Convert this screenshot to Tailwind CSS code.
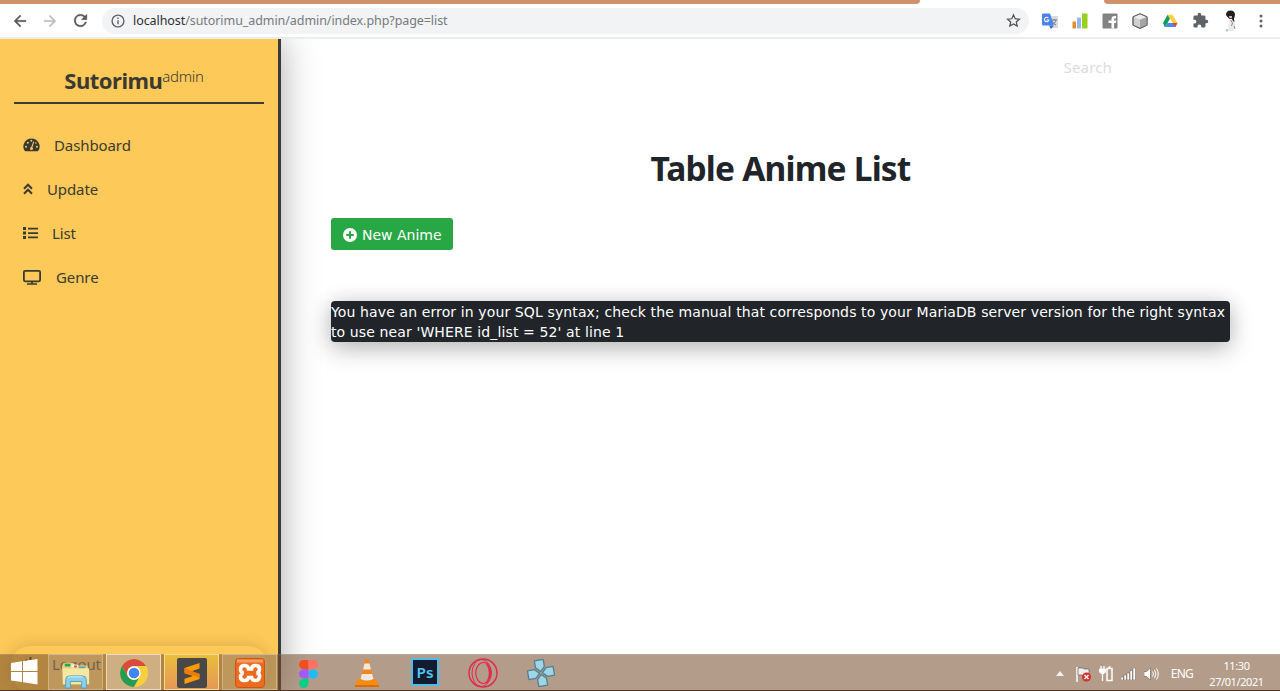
<!DOCTYPE html>
<html lang="en">
<head>
<meta charset="utf-8">
<title>Sutorimu admin</title>
<script src="https://cdn.jsdelivr.net/npm/@tailwindcss/browser@4"></script>
</head>
<body class="relative flex h-[691px] w-[1280px] flex-col overflow-hidden bg-white font-['Noto_Sans',sans-serif] text-[#212529]">

<!-- Browser tab strip -->
<div class="z-20 flex h-1 shrink-0 justify-between bg-white">
  <div class="w-[920px] rounded-br-[4px] bg-[#cf926c]"></div>
  <div class="w-[176px] rounded-bl-[4px] bg-[#cf926c]"></div>
</div>

<!-- Browser toolbar -->
<header class="z-20 flex h-[35px] shrink-0 items-center border-b-2 border-[#ebecec] bg-white pl-[11px] pr-[11px]">
  <svg class="h-[18px] w-[18px]" viewBox="0 0 24 24" fill="#55585c"><path d="M20 11H7.800l5.600-5.600L12 4l-8 8 8 8 1.400-1.400L7.800 13H20z" stroke="#55585c" stroke-width=".5"/></svg>
  <svg class="ml-3 h-[18px] w-[18px]" viewBox="0 0 24 24" fill="#bdbfc1"><path d="M4 11h12.200l-5.600-5.600L12 4l8 8-8 8-1.400-1.400 5.600-5.600H4z" stroke="#bdbfc1" stroke-width=".5"/></svg>
  <svg class="ml-3 h-[19px] w-[19px]" viewBox="0 0 24 24" fill="#55585c"><path d="M17.650 6.350A8 8 0 1 0 19.730 14h-2.080A6 6 0 1 1 12 6c1.660 0 3.140.69 4.220 1.780L13 11h7V4z" stroke="#55585c" stroke-width=".5"/></svg>
  <div class="ml-3 flex h-[26px] w-[927px] items-center rounded-full bg-[#f1f3f4] pl-[9px] pr-2">
    <svg class="h-[14px] w-[14px]" viewBox="0 0 14 14" fill="none" stroke="#5f6368" stroke-width="1.400"><circle cx="7" cy="7" r="5.900"/><path d="M7 6.200v4M7 3.600v1.400"/></svg>
    <span class="ml-2 pt-[2px] text-[12.5px] leading-none tracking-[-0.07px] text-[#777a7e] whitespace-nowrap"><span class="text-[#303134]">localhost</span>/sutorimu_admin/admin/index.php?page=list</span>
    <svg class="ml-auto h-[15px] w-[15px]" viewBox="0 0 24 24" fill="none" stroke="#505357" stroke-width="2"><path d="M12 3l2.700 6.200 6.800.6-5.100 4.500 1.500 6.600-5.900-3.500-5.900 3.500 1.500-6.600L2.500 9.800l6.800-.6z"/></svg>
  </div>
  <div class="ml-[13px] flex flex-1 items-center justify-between">
    <svg class="h-4 w-4" viewBox="0 0 16 16"><path d="M7 3h8a1 1 0 0 1 1 1v11H9z" fill="#d7dadf"/><path d="M9 7h6M12 6v1m2 0c-.5 2-2 4-4 5m0-4c1 2 2.500 3.500 4 4" stroke="#6d7b85" fill="none"/><path d="M1.200.5H8l3.500 11-2.500 1H1.200A1.200 1.200 0 0 1 0 11.300V1.700A1.200 1.200 0 0 1 1.200.5" fill="#4b83ea"/><path d="M7 12.500h5L9 16z" fill="#3367d6"/><path d="M6.300 5A2.200 2.200 0 1 0 6.800 7H4.700" fill="none" stroke="#fff" stroke-width="1.100"/></svg>
    <svg class="h-4 w-4" viewBox="0 0 16 16"><rect y="8.500" x=".5" width="3.500" height="7" rx=".5" fill="#f08a24"/><rect x="5" y="4.500" width="4" height="11" rx=".5" fill="#94b8ee"/><rect x="10" y=".5" width="5.500" height="15" rx=".5" fill="#97cf1c"/></svg>
    <svg class="h-4 w-4" viewBox="0 0 16 16"><rect x=".5" y=".5" width="15" height="15" rx="1" fill="#828282"/><path d="M14 3h-1.500c-2 0-3 1.200-3 3v1.500H6.500V10h3v5.500h2.600V10h1.900l.3-2.500h-2.200V6.400c0-.7.300-1 1-1H14z" fill="#fff"/></svg>
    <svg class="h-4 w-4" viewBox="0 0 16 16" stroke="#666" stroke-width="1" stroke-linejoin="round"><path d="M8 .8l7 3v8.400l-7 3.200-7-3.200V3.800z" fill="#d0d0d0"/><path d="M8 6.500l7-2.700v8.400l-7 3.200z" fill="#a5a5a5" stroke="none"/><path d="M1.500 4L8 6.500 14.500 4 8 1.300z" fill="#ececec" stroke="none"/><path d="M8 .8l7 3v8.400l-7 3.200-7-3.200V3.800z" fill="none"/></svg>
    <svg class="h-4 w-4" viewBox="0 0 16 16"><path d="M5.500 1.800h5L15.400 10h-5z" fill="#ffcf48"/><path d="M1 10l1.700 4h10.600l2.100-4H5.600L2.700 14z" fill="#4688f4"/><path d="M10.400 10h5l-2.100 4z" fill="#ea4335"/><path d="M1 10l1.700 4 2.900-4L8 6 5.500 1.800z" fill="#0f9d58"/><path d="M8 6l2.400 4H5.600z" fill="#fff"/></svg>
    <svg class="h-[17px] w-[17px]" viewBox="0 0 24 24" fill="#5f6368"><path d="M20.500 11H19V7a2 2 0 0 0-2-2h-4V3.500a2.500 2.500 0 0 0-5 0V5H4a2 2 0 0 0-2 2v3.800h1.500a2.700 2.700 0 0 1 0 5.400H2V20a2 2 0 0 0 2 2h3.800v-1.500a2.700 2.700 0 0 1 5.400 0V22H17a2 2 0 0 0 2-2v-4h1.500a2.500 2.500 0 0 0 0-5z"/></svg>
    <svg class="h-[22px] w-4" viewBox="0 0 16 22"><path d="M6 10l4-1 2.500 6-2 6H5l.5-5z" fill="#eceaec"/><path d="M3 5c0-3 1.500-4.500 4.500-4.500S12 2 12 5l-1 4 .5 3-1.500-1-1-2H6.500L4.500 7z" fill="#211d22"/><path d="M6 6h3L8.500 8.500 6.500 8z" fill="#e0c7c2"/><path d="M7.500 10l2 3-1 3M4 19v2.500M11 16l1 3" stroke="#8b878e" fill="none"/></svg>
    <svg class="h-4 w-4" viewBox="0 0 16 16" fill="#5f6368"><circle cx="8" cy="3" r="1.500"/><circle cx="8" cy="8" r="1.500"/><circle cx="8" cy="13" r="1.500"/></svg>
  </div>
</header>

<div class="flex min-h-0 flex-1">
  <!-- Sidebar -->
  <aside class="relative z-10 flex w-[281px] shrink-0 flex-col border-r-[3px] border-[#3a3a38] bg-[#fdc958] text-[#3a3a33] shadow-[0_0_34px_rgba(0,0,0,0.34)]">
    <div class="mx-[14px] flex h-[65px] items-start justify-center border-b-2 border-[#3a3a33] pr-[10px] pt-[25px]">
      <span class="text-[22px] font-bold leading-[32px] tracking-[-0.5px]">Sutorimu</span><span class="text-[15px] font-light leading-[24px] tracking-[-0.3px]">admin</span>
    </div>
    <nav class="mt-[19px] flex flex-col pl-[23px] text-[15px] leading-[44px] tracking-[-0.1px]">
      <a class="flex h-11 items-center"><svg class="h-[14px] w-[17px]" viewBox="0 0 17 14"><path d="M8.500.5a8 8 0 0 0-7 12c.2.500.6.700 1 .7h12c.4 0 .8-.2 1-.7a8 8 0 0 0-7-12z" fill="#3a3a33"/><g fill="#fdc958"><circle cx="3" cy="8.700" r="1"/><circle cx="4.800" cy="4.700" r="1"/><circle cx="8.300" cy="2.800" r="1"/><circle cx="14" cy="8.700" r="1"/><circle cx="12.800" cy="5" r=".8"/></g><path d="M10.800 3.600L8.700 9.500" stroke="#fdc958" stroke-width="1.100"/><circle cx="8.500" cy="10.500" r="1.500" fill="#fdc958"/></svg><span class="ml-[14px]">Dashboard</span></a>
      <a class="flex h-11 items-center"><svg class="h-3 w-[10px]" viewBox="0 0 10 12" fill="none" stroke="#3a3a33" stroke-width="2"><path d="M1 5.700l4-4 4 4M1 10.700l4-4 4 4"/></svg><span class="ml-[14px]">Update</span></a>
      <a class="flex h-11 items-center"><svg class="h-3 w-[15px]" viewBox="0 0 15 12" fill="#3a3a33"><path d="M0 0h3v3H0zm0 4.500h3v3H0zM0 9h3v3H0zM5 .7h10v1.700H5zm0 4.500h10v1.700H5zm0 4.400h10v1.700H5z"/></svg><span class="ml-[14px]">List</span></a>
      <a class="flex h-11 items-center"><svg class="h-[15px] w-[18px]" viewBox="0 0 18 15" fill="none" stroke="#3a3a33" stroke-width="1.800"><rect x=".9" y=".9" width="16.200" height="10.400" rx="1.200"/><path d="M4 14h10M9 11v3" stroke-width="1.600"/></svg><span class="ml-[15px]">Genre</span></a>
    </nav>
    <div class="mx-[10px] mt-auto flex h-[45px] items-center rounded-[20px] bg-[#fdc958] pl-[13px] pb-2 shadow-[0_0_16px_rgba(0,0,0,0.16)]">
      <svg class="h-[15px] w-[15px]" viewBox="0 0 15 15" fill="none" stroke="#3a3a33" stroke-width="2"><path d="M4 2.500a6 6 0 1 0 7 0M7.500 0v7"/></svg><span class="ml-[14px] text-[15px] tracking-[-0.2px]">Logout</span>
    </div>
  </aside>

  <!-- Content -->
  <main class="flex flex-1 flex-col px-[50px]">
    <div class="flex h-[58px] justify-end pr-[118px]"><span class="text-[15px] leading-[57px] tracking-[0.15px] text-[#dcdcdc]">Search</span></div>
    <h1 class="mt-[46px] text-center text-[33.5px] font-bold leading-[51px] tracking-[-0.8px]">Table Anime List</h1>
    <button class="mt-[24px] flex h-[32px] w-[122px] items-center rounded-[3px] bg-[#28a745] pl-3 font-['DejaVu_Sans',sans-serif] text-[14px] text-white whitespace-nowrap">
      <svg class="mt-px h-[14px] w-[14px] shrink-0" viewBox="0 0 14 14"><circle cx="7" cy="7" r="7" fill="#fff"/><path d="M7 3.200v7.600M3.200 7h7.600" stroke="#28a745" stroke-width="2"/></svg><span class="ml-[5px] pt-[3px]">New Anime</span>
    </button>
    <div class="mt-[51px] h-[41px] rounded-[4px] bg-[#212529] pt-px font-['DejaVu_Sans',sans-serif] text-[14px] leading-[20px] tracking-[0.118px] text-white whitespace-nowrap shadow-[0_8px_24px_rgba(0,0,0,0.22),0_0_20px_rgba(0,0,0,0.12)]">
      <p>You have an error in your SQL syntax; check the manual that corresponds to your MariaDB server version for the right syntax</p>
      <p>to use near 'WHERE id_list = 52' at line 1</p>
    </div>
  </main>
</div>

<!-- Windows taskbar, lying over the page -->
<footer class="absolute inset-x-0 bottom-0 z-20 flex h-[37px] items-center border-b border-[#4e3527] bg-[#78502f]/56 text-white shadow-[inset_0_1px_0_rgba(255,255,255,0.12)]">
  <div class="flex w-[48px] justify-center"><svg class="h-[26px] w-[27px]" viewBox="0 0 27 26" fill="#fff"><path d="M0 4l11-1.700V12H0zM12 2.100L26.500 0v12H12zM0 13h11v10L0 21.500zm12 0h14.500v12.500L12 23.300z"/></svg></div>
  <div class="flex h-9 gap-[3px]">
    <div class="flex w-[55px] items-center justify-center border border-[#dcc4a4]/60 bg-white/15">
      <svg class="mt-[3px] h-[30px] w-[30px]" viewBox="0 0 32 32"><path d="M1 8l2-4h10l2 3h13l1 3v17H2z" fill="#e6cf7d"/><path d="M4 5h6v3H4z" fill="#25a94b"/><path d="M11 6h7v3h-7z" fill="#f6f6ed"/><path d="M19 8h7v2h-7z" fill="#4ba3cf"/><path d="M14 7h3v2h-3z" fill="#d94a36"/><path d="M2 10h28v17H2z" fill="#f6e7a1"/><path d="M5 31v-9q0-4 4-4h14q4 0 4 4v9h-5v-7H10v7z" fill="#8ccfe9" stroke="#4da1c9"/><path d="M7 20q1-1 3-1h13" stroke="#dff5fc" fill="none"/></svg>
    </div>
    <div class="flex w-[55px] items-center justify-center border border-[#f0dfc8]/90 bg-white/35">
      <svg class="mt-[2px] h-7 w-7" viewBox="0 0 28 28"><circle cx="14" cy="14" r="14" fill="#f9cf3c"/><path d="M1.900 7A14 14 0 0 1 26.100 7H14a7 7 0 0 0-6 10.500z" fill="#d94b40"/><path d="M1.900 7A14 14 0 0 0 14 28l6.100-10.500A7 7 0 0 1 8 17.500z" fill="#259b57"/><path d="M26.100 7.600H14a6.400 6.400 0 0 1 6 9.900L14 28A14 14 0 0 0 26.100 7.600z" fill="#f9cf3c"/><circle cx="14" cy="14" r="6.800" fill="#fff"/><circle cx="14" cy="14" r="5.300" fill="#4285f4"/></svg>
    </div>
    <div class="flex w-[55px] items-center justify-center border border-[#f6d995] bg-gradient-to-b from-[#e9bd39] to-[#e79755]">
      <svg class="mt-px h-[30px] w-[30px]" viewBox="0 0 30 30"><rect width="30" height="30" rx="2" fill="#484848"/><path d="M7.500 10L22.500 5v5.500l-8 2.800 8 2.700v5L7.500 26v-5.200l8.500-2.800-8.500-2.700z" fill="#ff9b0a"/><path d="M7.500 10l15 6v3.500l-15-4.700z" fill="#e87e00"/></svg>
    </div>
    <div class="flex w-[55px] items-center justify-center border border-[#dcc4a4]/60 bg-white/15">
      <svg class="mt-px h-[30px] w-[30px]" viewBox="0 0 30 30"><rect x=".5" y=".5" width="29" height="29" rx="3" fill="#ed6b1e" stroke="#c95614"/><path d="M2 1.500h26v3H2z" fill="#f49b63"/><path d="M9.500 7.500q-4 0-4 3.500t3 4q-3 .5-3 4t4 3.500q3.500 0 4-3h3q.5 3 4 3t4-3.500-3-4q3-.5 3-4t-4-3.500-4 3.500h-3q-.5-3.500-4-3.500z" fill="none" stroke="#fff" stroke-width="3.600"/></svg>
    </div>
  </div>
  <svg class="ml-[22px] mt-[3px] h-[28px] w-[19px]" viewBox="0 0 19 28"><path d="M4.700 0h4.800v9.300H4.700a4.650 4.650 0 0 1 0-9.300z" fill="#f24e1e"/><path d="M9.500 0h4.800a4.650 4.650 0 0 1 0 9.300H9.500z" fill="#ff7262"/><path d="M4.700 9.300h4.800v9.300H4.700a4.650 4.650 0 0 1 0-9.300z" fill="#a259ff"/><circle cx="14.200" cy="14" r="4.650" fill="#1abcfe"/><path d="M4.700 18.600h4.800v4.700a4.700 4.700 0 1 1-4.800-4.700z" fill="#0acf83"/></svg>
  <svg class="ml-[36px] mt-px h-[28px] w-[26px]" viewBox="0 0 26 28"><path d="M4 20h18l3 6v2H1v-2z" fill="#f58c14"/><path d="M1 26h24v2H1z" fill="#d96e05"/><path d="M11.500 0h3L20 21q-7 4-14 0z" fill="#f3861a"/><path d="M10.500 4.500h5l1.500 6H9zM7.800 15h10.400l1.300 5q-6.500 3-13 0z" fill="#eee9e2"/></svg>
  <svg class="ml-[31px] h-[28px] w-[28px]" viewBox="0 0 28 28"><rect x="1" y="1" width="26" height="26" fill="#151b2f" stroke="#4fbbe8" stroke-width="2"/><text x="5.500" y="19.500" font-family="Noto Sans, sans-serif" font-size="15" font-weight="600" fill="#4fc6f4" textLength="17" lengthAdjust="spacingAndGlyphs">Ps</text></svg>
  <svg class="ml-[29px] mt-[2px] h-[30px] w-[30px]" viewBox="0 0 30 30" fill="none" stroke="#e22b50" stroke-width="1.500"><circle cx="15" cy="15" r="14"/><ellipse cx="13.500" cy="15" rx="9.500" ry="13.500" stroke-width="1"/><ellipse cx="15.500" cy="15" rx="7.800" ry="10.500" stroke-width="1.200"/><path d="M18 6q5 3 5 9t-5 9q3-4 3-9T18 6" fill="#e22b50" stroke-width=".3"/></svg>
  <svg class="ml-[29px] mt-[2px] h-[28px] w-[28px]" viewBox="0 0 28 28"><g transform="rotate(-10 14 14)" fill="#9ed5e7" stroke="#527f91" stroke-width="1.300" stroke-linejoin="round"><path d="M9.500 1h9v7L14 12.500 9.500 8z"/><path d="M9.500 27h9v-7L14 15.500 9.500 20z"/><path d="M1 9.500v9h7l4.500-4.500L8 9.500z"/><path d="M27 9.500v9h-7L15.500 14 20 9.500z"/></g></svg>
  <div class="ml-auto flex items-center pr-[16px] pt-[3px]">
    <svg class="h-[5px] w-[8px]" viewBox="0 0 8 5"><path d="M0 5l4-5 4 5z" fill="#f5efec"/></svg>
    <svg class="ml-[12px] mt-px h-[15px] w-[15px]" viewBox="0 0 15 15"><path d="M1 0v15" stroke="#fff" stroke-width="1.500"/><path d="M2 1h5l1 1h5v7H7L6 8H2z" fill="#eee" stroke="#5b514c" stroke-width=".6"/><circle cx="10.500" cy="10" r="4.500" fill="#d7302b"/><path d="M8.500 8l4 4m0-4l-4 4" stroke="#fff" stroke-width="1.400"/></svg>
    <svg class="ml-[8px] mt-px h-[16px] w-[14px]" viewBox="0 0 14 16" fill="none" stroke="#fff"><path d="M2 0v3M5 0v3M3.500 7v8" stroke-width="1.300"/><path d="M.5 3h6v3L5 7.500H2L.5 6z" fill="#fff"/><path d="M8 2.500h5v12H8zM9.500 1h2" stroke-width="1.500"/></svg>
    <svg class="ml-[8px] mt-px h-[12px] w-[15px]" viewBox="0 0 15 12" fill="#fff" stroke="#6b5950" stroke-width=".5"><path d="M0 9h2.500v3H0zm3-2h2.500v5H3zm3-2h2.500v7H6zm3-2.500h2.500V12H9zM12 0h2.500v12H12z"/></svg>
    <svg class="ml-[8px] mt-px h-[14px] w-[15px]" viewBox="0 0 15 14" fill="none" stroke="#fff"><path d="M0 4.500h2.500L6.500 1v12L2.500 9.500H0z" fill="#fff" stroke="#6b5950" stroke-width=".6"/><path d="M8.500 4.500q2 2.500 0 5M10.500 3q3 4 0 8M12.500 1.500q3.500 5.500 0 11"/></svg>
    <span class="ml-[12px] text-[12px] leading-none tracking-[-0.8px]">ENG</span>
    <div class="ml-[16px] w-[55px] text-center text-[11px] leading-[16px] tracking-[-0.4px] whitespace-nowrap"><div>11:30</div><div>27/01/2021</div></div>
  </div>
</footer>
</body>
</html>
